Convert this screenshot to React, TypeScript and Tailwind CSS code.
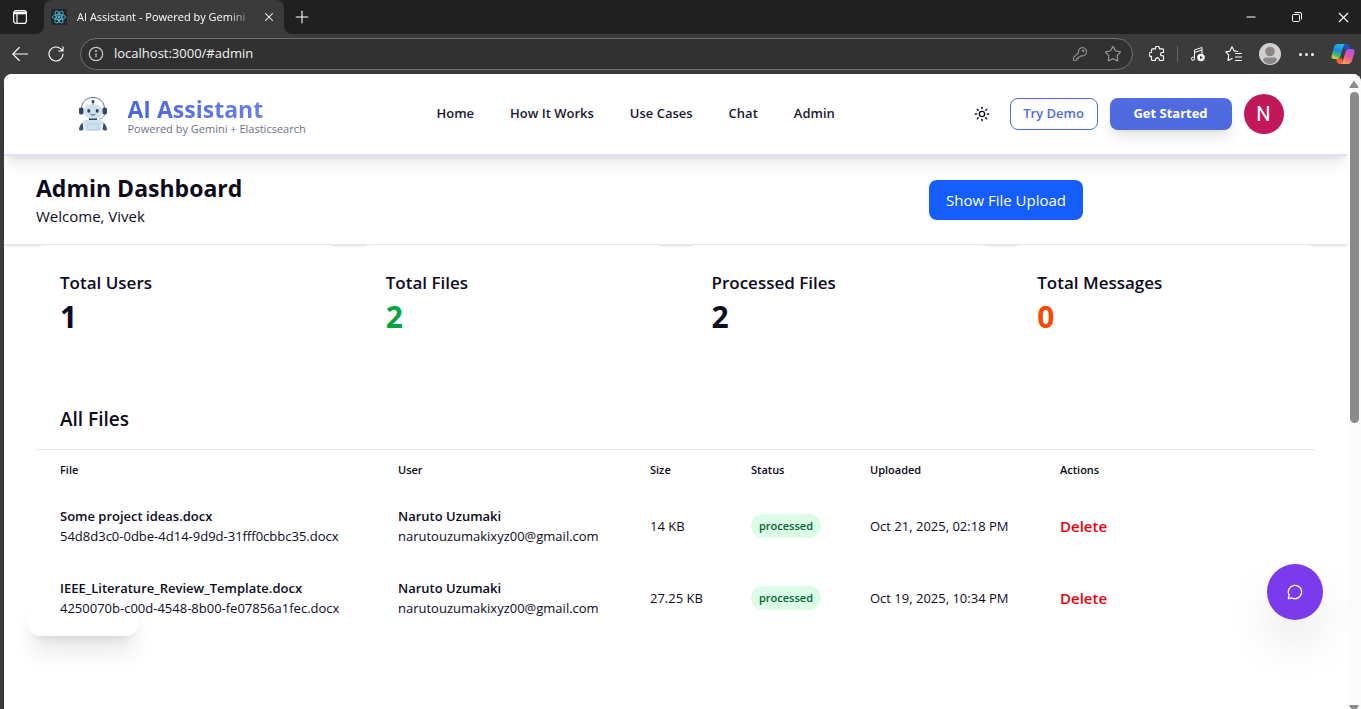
import React from "react";
import { MessageCircle, Minus, Plus, Star, Sun, X } from "lucide-react";

interface FileRow {
  name: string;
  storedName: string;
  owner: string;
  email: string;
  size: string;
  status: string;
  uploaded: string;
}

const navLinks = [
  { label: "Home", href: "#home" },
  { label: "How It Works", href: "#how-it-works" },
  { label: "Use Cases", href: "#use-cases" },
  { label: "Chat", href: "#chat" },
  { label: "Admin", href: "#admin" },
];

const stats = [
  { label: "Total Users", value: 1, color: "text-[#0c0a1d]" },
  { label: "Total Files", value: 2, color: "text-green-600" },
  { label: "Processed Files", value: 2, color: "text-[#0c0a1d]" },
  { label: "Total Messages", value: 0, color: "text-orange-600" },
];

const columns = ["File", "User", "Size", "Status", "Uploaded", "Actions"];

const files: FileRow[] = [
  {
    name: "Some project ideas.docx",
    storedName: "54d8d3c0-0dbe-4d14-9d9d-31fff0cbbc35.docx",
    owner: "Naruto Uzumaki",
    email: "narutouzumakixyz00@gmail.com",
    size: "14 KB",
    status: "processed",
    uploaded: "Oct 21, 2025, 02:18 PM",
  },
  {
    name: "IEEE_Literature_Review_Template.docx",
    storedName: "4250070b-c00d-4548-8b00-fe07856a1fec.docx",
    owner: "Naruto Uzumaki",
    email: "narutouzumakixyz00@gmail.com",
    size: "27.25 KB",
    status: "processed",
    uploaded: "Oct 19, 2025, 10:34 PM",
  },
];

const ReactIcon = () => (
  <svg viewBox="0 0 16 16" className="h-4 w-4 shrink-0" fill="none" stroke="#4fb6d3" strokeWidth="0.9">
    <rect width="16" height="16" rx="2" fill="#20262c" stroke="none" />
    <ellipse cx="8" cy="8" rx="6.6" ry="2.5" />
    <ellipse cx="8" cy="8" rx="6.6" ry="2.5" transform="rotate(60 8 8)" />
    <ellipse cx="8" cy="8" rx="6.6" ry="2.5" transform="rotate(120 8 8)" />
    <circle cx="8" cy="8" r="1.4" fill="#4fb6d3" stroke="none" />
  </svg>
);

const CopilotIcon = () => (
  <svg viewBox="0 0 24 22" className="h-[22px] w-6">
    <defs>
      <linearGradient id="copilotLeft" x1="0.6" y1="0" x2="0.3" y2="1">
        <stop offset="0" stopColor="#22b8f0" />
        <stop offset="0.45" stopColor="#1f86e0" />
        <stop offset="0.75" stopColor="#4bb86a" />
        <stop offset="1" stopColor="#e8d02c" />
      </linearGradient>
      <linearGradient id="copilotRight" x1="0.7" y1="0" x2="0.3" y2="1">
        <stop offset="0" stopColor="#a855f0" />
        <stop offset="0.5" stopColor="#e8569c" />
        <stop offset="1" stopColor="#ffa04a" />
      </linearGradient>
    </defs>
    <path d="M12 1h4.2c1.2 0 1.9.8 2.2 1.9l.9 3.1h-3c-1.3 0-2.2.8-2.600 2z" fill="#1b4fc4" />
    <path d="M12 21H8.2c-1.2 0-1.9-.8-2.2-1.9L5.1 16h3c1.3 0 2.2-.8 2.6-2z" fill="#f2603c" />
    <path d="M7 1h7.5c-1.2.3-1.7 1.2-2.1 2.5l-3 10C9 15 8 16 6.5 16H3c-2 0-2.9-1.500-2.400-3.500l2.300-8C3.500 2.200 5 1 7 1z" fill="url(#copilotLeft)" />
    <path d="M17 21H9.5c1.2-.3 1.7-1.2 2.1-2.500l3-10C15 7 16 6 17.500 6H21c2 0 2.900 1.500 2.400 3.500l-2.300 8C20.500 19.800 19 21 17 21z" fill="url(#copilotRight)" />
  </svg>
);

const RobotLogo = () => (
  <svg viewBox="0 0 44 44" className="h-11 w-11 shrink-0" fill="none">
    <path d="M9.5 17C9.5 10 14.5 5.5 21 5.5S32.5 10 32.5 17" stroke="#5b6b86" strokeWidth="1" />
    <path d="M32.500 21c0 4-2 5.500-5 6" stroke="#5b6b86" strokeWidth="0.8" />
    <path d="M21 10v4" stroke="#2f4668" strokeWidth="1" />
    <circle cx="21" cy="9.5" r="1.5" fill="#2f4668" />
    <rect x="17" y="25" width="8" height="4" fill="#2f4668" />
    <rect x="12" y="12.5" width="18" height="14" rx="6.5" fill="#cfe1ef" />
    <rect x="7" y="15.5" width="4.500" height="7" rx="1.8" fill="#2f4668" />
    <rect x="30.500" y="15.5" width="4.500" height="7" rx="1.8" fill="#2f4668" />
    <ellipse cx="16.8" cy="18.8" rx="1.5" ry="1.9" fill="#2f4668" />
    <ellipse cx="25.2" cy="18.8" rx="1.5" ry="1.9" fill="#2f4668" />
    <path d="M18.800 22.200c1.200 1.300 3.200 1.300 4.400 0" stroke="#2f4668" strokeWidth="0.9" strokeLinecap="round" />
    <path d="M10.500 30.500c-2 1.500-3.500 4.500-3.500 7.500 2 1 3.500.7 4.500-.5z" fill="#3a5276" />
    <path d="M31.500 30.500c2 1.500 3.500 4.500 3.500 7.500-2 1-3.500.7-4.500-.5z" fill="#3a5276" />
    <path d="M10.500 30.500c.8-1.700 2-2.500 4-2.500h13c2 0 3.200.8 4 2.500l-2 3-.7 5.500H13.200l-.7-5.500z" fill="#cfe1ef" />
    <rect x="15.500" y="32" width="11" height="5.500" rx="1.500" stroke="#b3cde0" strokeWidth="0.8" />
  </svg>
);

const TitleBar = () => (
  <div className="flex h-[34px] bg-[#202020] text-white">
    <div className="bg-[#3b3b3b]">
      <button aria-label="Tab actions" className="flex h-full w-11 items-center rounded-br-lg bg-[#202020] pl-3">
        <svg viewBox="0 0 16 16" className="h-4 w-4" fill="none" stroke="currentColor" strokeWidth="1.200">
          <rect x="1.6" y="1.6" width="12.8" height="12.8" rx="2.5" />
          <path d="M2 4h12" strokeWidth="2.600" />
          <path d="M5 5v9" />
        </svg>
      </button>
    </div>
    <div className="flex w-60 items-center rounded-t-lg bg-[#3b3b3b] pr-2 pl-[7px] text-[11px]">
      <ReactIcon />
      <span className="mr-2 ml-2.5 flex-1 overflow-hidden whitespace-nowrap [mask-image:linear-gradient(to_right,black_85%,transparent)]">
        AI Assistant - Powered by Gemini
      </span>
      <button aria-label="Close tab">
        <X size={14} strokeWidth={1.8} />
      </button>
    </div>
    <div className="flex-1 bg-[#3b3b3b]">
      <div className="flex h-full items-center justify-between rounded-bl-lg bg-[#202020] pl-2">
        <button aria-label="New tab">
          <Plus size={20} strokeWidth={1.3} />
        </button>
        <div className="flex gap-2.5">
          <button aria-label="Minimize" className="flex w-9 items-center justify-center">
            <Minus size={14} strokeWidth={1.8} />
          </button>
          <button aria-label="Restore" className="flex w-9 items-center justify-center">
            <svg viewBox="0 0 10 10" className="h-2.5 w-2.5" fill="none" stroke="currentColor">
              <rect x="0.5" y="2.5" width="7" height="7" rx="1" />
              <path d="M2.500.5H8A1.500 1.500 0 0 1 9.500 2v5.500" />
            </svg>
          </button>
          <button aria-label="Close window" className="flex w-9 items-center justify-center">
            <X size={17} strokeWidth={1.6} />
          </button>
        </div>
      </div>
    </div>
  </div>
);

const Toolbar = () => (
  <div className="flex h-10 items-center bg-[#3b3b3b] pl-0.5 text-white">
    <button aria-label="Back" className="flex w-9 justify-center">
      <svg viewBox="0 0 16 16" className="h-4 w-4" fill="none" stroke="currentColor" strokeWidth="1.100" strokeLinecap="round" strokeLinejoin="round">
        <path d="M15.500 8H.8M7.300 1.500L.8 8l6.500 6.500" />
      </svg>
    </button>
    <button aria-label="Refresh" className="flex w-9 justify-center">
      <svg viewBox="0 0 16 16" className="h-4 w-4" fill="none" stroke="currentColor" strokeWidth="1.100" strokeLinecap="round" strokeLinejoin="round">
        <path d="M15 8a7 7 0 1 1-2.200-5.100L15 5M15 .8V5h-4.200" />
      </svg>
    </button>
    <div className="ml-1.5 flex h-8 flex-1 items-center rounded-full border border-[#6e6e6e] bg-[#313131] pr-2.5 pl-[7px]">
      <svg viewBox="0 0 16 16" className="h-4 w-4 shrink-0 text-[#c8c8c8]" fill="none" stroke="currentColor" strokeWidth="1.200">
        <circle cx="8" cy="8" r="6.7" />
        <path d="M8 7.200v4" />
        <circle cx="8" cy="5" r="0.4" fill="currentColor" />
      </svg>
      <input
        type="text"
        aria-label="Address"
        defaultValue="localhost:3000/#admin"
        className="ml-2.5 min-w-0 flex-1 bg-transparent text-[13px] text-[#f3f3f3] outline-none"
      />
      <button aria-label="Saved passwords" className="text-[#8f8f8f]">
        <svg viewBox="0 0 16 16" className="h-4 w-4" fill="none" stroke="currentColor" strokeWidth="1.100" strokeLinejoin="round">
          <path d="M10.400 1.500a4.200 4.200 0 1 1-1.300 8.200L7.800 11H6.300v1.600H4.700v1.700H1.500v-2.700l5-5a4.200 4.200 0 0 1 3.900-5.100z" />
          <circle cx="11.3" cy="4.700" r="0.700" fill="currentColor" />
        </svg>
      </button>
      <button aria-label="Add to favorites" className="ml-4 text-[#a0a0a0]">
        <Star size={18} strokeWidth={1.4} />
      </button>
    </div>
    <button aria-label="Extensions" className="ml-1.5 flex w-9 justify-center">
      <svg viewBox="0 0 16 16" className="h-4 w-4" fill="none" stroke="currentColor" strokeWidth="1.200" strokeLinejoin="round">
        <path d="M3.500 2.800h3a2 2 0 1 1 3.800 0h3.200c.6 0 1 .4 1 1v2.700h-1.300a1.700 1.700 0 0 0 0 3.400h1.300v3.600c0 .6-.4 1-1 1h-3.200a2 2 0 1 0-3.800 0h-3c-.6 0-1-.4-1-1v-3.100a2 2 0 1 1 0-3.900V3.800c0-.6.4-1 1-1z" />
      </svg>
    </button>
    <div className="mx-0.5 h-4 w-px bg-[#636363]" />
    <button aria-label="Media" className="flex w-9 justify-center">
      <svg viewBox="0 0 16 16" className="h-4 w-4" fill="none" stroke="currentColor" strokeWidth="1">
        <path d="M4.500 12.500V4l7.500-2.500V8M4.500 6.500L12 4" />
        <circle cx="3" cy="12.7" r="1.6" />
        <circle cx="11" cy="11.5" r="3.8" fill="currentColor" stroke="none" />
        <path d="M10 9.700v3.600l2.800-1.800z" fill="#3b3b3b" stroke="none" />
      </svg>
    </button>
    <button aria-label="Favorites" className="flex w-9 justify-center">
      <svg viewBox="0 0 18 18" className="h-[18px] w-[18px]" fill="none" stroke="currentColor" strokeWidth="1.100" strokeLinejoin="round" strokeLinecap="round">
        <path d="M12.800 6.500l-3.600-.6L7 1.700 4.800 6.200l-4 .7 3 3.300-.8 5.200 4.200-2M10.500 8.500h6M10.500 12h6M10.500 15.500h6" />
      </svg>
    </button>
    <button aria-label="Profile" className="flex w-9 justify-center">
      <svg viewBox="0 0 22 22" className="h-[22px] w-[22px]">
        <circle cx="11" cy="11" r="11" fill="#d2d0ce" />
        <circle cx="11" cy="8.5" r="4.8" fill="#8a8886" />
        <path d="M4 17c0-1.500 1-2.500 2.500-2.500h9c1.500 0 2.500 1 2.500 2.500-1.500 2.800-4 4-7 4s-5.500-1.200-7-4z" fill="#8a8886" />
      </svg>
    </button>
    <button aria-label="Settings and more" className="flex w-9 justify-center gap-[3px]">
      <span className="h-[3px] w-[3px] rounded-full bg-white" />
      <span className="h-[3px] w-[3px] rounded-full bg-white" />
      <span className="h-[3px] w-[3px] rounded-full bg-white" />
    </button>
    <button aria-label="Copilot" className="flex w-[37px] justify-center">
      <CopilotIcon />
    </button>
  </div>
);

const Navbar = () => (
  <nav className="relative z-10 border-b-2 border-[#dfe0fa] bg-white shadow-lg">
    <div className="mx-auto flex h-20 max-w-7xl items-center justify-between pr-8 pl-9">
      <div className="flex items-center gap-3">
        <RobotLogo />
        <div className="pt-1.5">
          <div className="bg-gradient-to-r from-[#4a67dd] to-[#7285ea] bg-clip-text text-[23px] leading-6 font-bold text-transparent">
            AI Assistant
          </div>
          <div className="text-[11px] leading-4 text-gray-500">Powered by Gemini + Elasticsearch</div>
        </div>
      </div>
      <div className="flex gap-3">
        {navLinks.map((link) => (
          <a key={link.label} href={link.href} className="px-3 text-[13px] font-semibold text-[#1a1830]">
            {link.label}
          </a>
        ))}
      </div>
      <div className="flex items-center gap-3">
        <button aria-label="Toggle theme" className="flex h-8 w-8 items-center justify-center">
          <Sun size={16} strokeWidth={2} />
        </button>
        <button className="h-8 w-[88px] rounded-lg border border-[#4f6bdf] text-[13px] font-semibold text-[#4f6bdf]">
          Try Demo
        </button>
        <button className="h-8 w-[122px] rounded-lg bg-[#4f6bdf] text-[13px] font-bold text-white shadow-lg">
          Get Started
        </button>
        <button
          aria-label="Account"
          className="h-10 w-10 rounded-full bg-[#c2185b] font-[Roboto,sans-serif] text-xl text-white"
        >
          N
        </button>
      </div>
    </div>
  </nav>
);

const FilesTable = () => (
  <section className="relative mt-5">
    <h2 className="border-b border-gray-200 px-6 pt-6 pb-4 text-[19px] leading-7 font-semibold">All Files</h2>
    <table className="w-full table-fixed text-left text-[13px] leading-5">
      <colgroup>
        <col className="w-[338px]" />
        <col className="w-[252px]" />
        <col className="w-[101px]" />
        <col className="w-[119px]" />
        <col className="w-[190px]" />
        <col />
      </colgroup>
      <thead className="text-[11px] leading-4">
        <tr>
          {columns.map((column) => (
            <th key={column} className="px-6 py-3 font-semibold">
              {column}
            </th>
          ))}
        </tr>
      </thead>
      <tbody>
        {files.map((file) => (
          <tr key={file.storedName} className="whitespace-nowrap">
            <td className="px-6 py-4">
              <div className="font-semibold">{file.name}</div>
              <div>{file.storedName}</div>
            </td>
            <td className="px-6 py-4">
              <div className="font-semibold">{file.owner}</div>
              <div>{file.email}</div>
            </td>
            <td className="px-6 py-4">{file.size}</td>
            <td className="px-6 py-4">
              <span className="inline-flex rounded-full bg-green-100 px-2 py-1 text-[11px] leading-4 font-semibold text-green-800">
                {file.status}
              </span>
            </td>
            <td className="px-6 py-4">{file.uploaded}</td>
            <td className="px-6 py-4">
              <button className="text-[15px] font-semibold text-red-600">Delete</button>
            </td>
          </tr>
        ))}
      </tbody>
    </table>
  </section>
);

const Dashboard = () => (
  <main className="flex-1">
    <header className="flex items-center justify-between border-b border-gray-200 px-8 py-4 shadow-sm">
      <div>
        <h1 className="text-[23px] leading-8 font-bold">Admin Dashboard</h1>
        <p className="text-[15px] leading-6">Welcome, Vivek</p>
      </div>
      <button className="mr-[232px] h-10 w-[154px] rounded-lg bg-[#155dfc] text-[15px] whitespace-nowrap text-white">
        Show File Upload
      </button>
    </header>
    <div className="px-8">
      <div className="grid grid-cols-4 gap-6">
        {stats.map((stat) => (
          <div key={stat.label} className="relative rounded-lg bg-white p-6">
            <h3 className="text-[17px] leading-7 font-semibold">{stat.label}</h3>
            <p className={`text-3xl leading-10 font-bold ${stat.color}`}>{stat.value}</p>
          </div>
        ))}
      </div>
      <FilesTable />
    </div>
  </main>
);

const Scrollbar = () => (
  <div className="flex w-3.5 flex-col items-center justify-between bg-[#fcfcfc] pt-1.5">
    <div className="flex flex-col items-center gap-1">
      <svg viewBox="0 0 10 8" className="h-2 w-2.5" fill="#8b8b8b">
        <path d="M5 .5L9.500 7v1h-9V7z" />
      </svg>
      <div className="h-[331px] w-[9px] rounded-full bg-[#8b8b8b]" />
    </div>
    <svg viewBox="0 0 10 4" className="h-1 w-2.5" fill="#8b8b8b">
      <path d="M.5 0h9v1.500L7.500 4h-5L.5 1.500z" />
    </svg>
  </div>
);

export default function App(): React.JSX.Element {
  return (
    <div className="flex h-screen flex-col overflow-hidden bg-[#3b3b3b] font-['Open_Sans',sans-serif] text-[#0c0a1d]">
      <TitleBar />
      <Toolbar />
      <div className="ml-1 flex flex-1 overflow-hidden rounded-t-lg bg-white">
        <div className="relative isolate flex flex-1 flex-col overflow-hidden">
          <div className="absolute bottom-[73px] left-6 -z-10 h-10 w-[110px] rounded-xl bg-white shadow-xl" />
          <Navbar />
          <Dashboard />
          <button
            aria-label="Open chat"
            className="absolute right-6 bottom-[89px] z-20 flex h-14 w-14 items-center justify-center rounded-full bg-[#7c3aed] text-white shadow-2xl"
          >
            <MessageCircle size={16} strokeWidth={2} />
          </button>
        </div>
        <Scrollbar />
      </div>
    </div>
  );
}
